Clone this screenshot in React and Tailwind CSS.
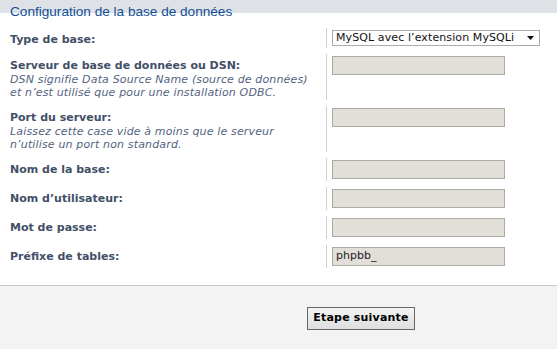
const rows = [
  { label: "Type de base:", select: true },
  {
    label: "Serveur de base de données ou DSN:",
    desc: ["DSN signifie Data Source Name (source de données)", "et n’est utilisé que pour une installation ODBC."],
  },
  {
    label: "Port du serveur:",
    desc: ["Laissez cette case vide à moins que le serveur", "n’utilise un port non standard."],
  },
  { label: "Nom de la base:" },
  { label: "Nom d’utilisateur:" },
  { label: "Mot de passe:" },
  { label: "Préfixe de tables:", value: "phpbb_" },
];

const verdana = "font-['DejaVu_Sans',Verdana,sans-serif]";

const App = () => {
  return (
    <div className={`flex h-screen w-full flex-col bg-white ${verdana}`}>
      <div className="h-[28px] bg-[linear-gradient(to_bottom,#dee1e5_13px,#ffffff_13px)] pl-[10px] pt-[3px]">
        <h1 className="font-['Liberation_Sans',Arial,sans-serif] text-[13.6px] leading-[18px] text-[#115098]">
          Configuration de la base de données
        </h1>
      </div>

      <div className="flex flex-col gap-[6px]">
        {rows.map((r) => (
          <div key={r.label} className="flex">
            <div className="w-[326px] shrink-0 pl-[10px] pt-[5px] pb-[1px]">
              <div className="text-[11px] font-bold leading-[14px] text-[#425067] whitespace-nowrap">{r.label}</div>
              {r.desc && (
                <div className="text-[11px] italic leading-[13px] tracking-[0.15px] text-[#536482] whitespace-nowrap">
                  {r.desc[0]}
                  <br />
                  {r.desc[1]}
                </div>
              )}
            </div>
            <div className="border-l border-[#cfcfcf] py-[2px] pl-[5px]">
              {r.select ? (
                <div className="flex h-[16px] w-[208px] items-center justify-between border border-[#a7adb3] bg-white pl-[3px] pr-[5px]">
                  <span className="text-[11px] leading-[14px] tracking-[0.1px] text-[#111]">MySQL avec l’extension MySQLi</span>
                  <svg width="7" height="4" viewBox="0 0 7 4">
                    <path d="M0 0h7L3.5 4z" fill="#111" />
                  </svg>
                </div>
              ) : (
                <div className="flex h-[19px] w-[173px] items-center border border-[#aeaaa4] bg-[#e2ded8] px-[3px] text-[11px] text-[#222]">
                  {r.value}
                </div>
              )}
            </div>
          </div>
        ))}
      </div>

      <div className="mt-auto h-[64px] border-t border-[#c8c8c8] bg-[#f3f3f3] pl-[307px] pt-[18px]">
        <button className="h-[23px] w-[108px] border border-[#666] bg-[linear-gradient(to_bottom,#f4f4f4,#dedede)] text-[11px] font-bold tracking-[0.2px] text-black">
          Etape suivante
        </button>
      </div>
    </div>
  );
};

export default App;
